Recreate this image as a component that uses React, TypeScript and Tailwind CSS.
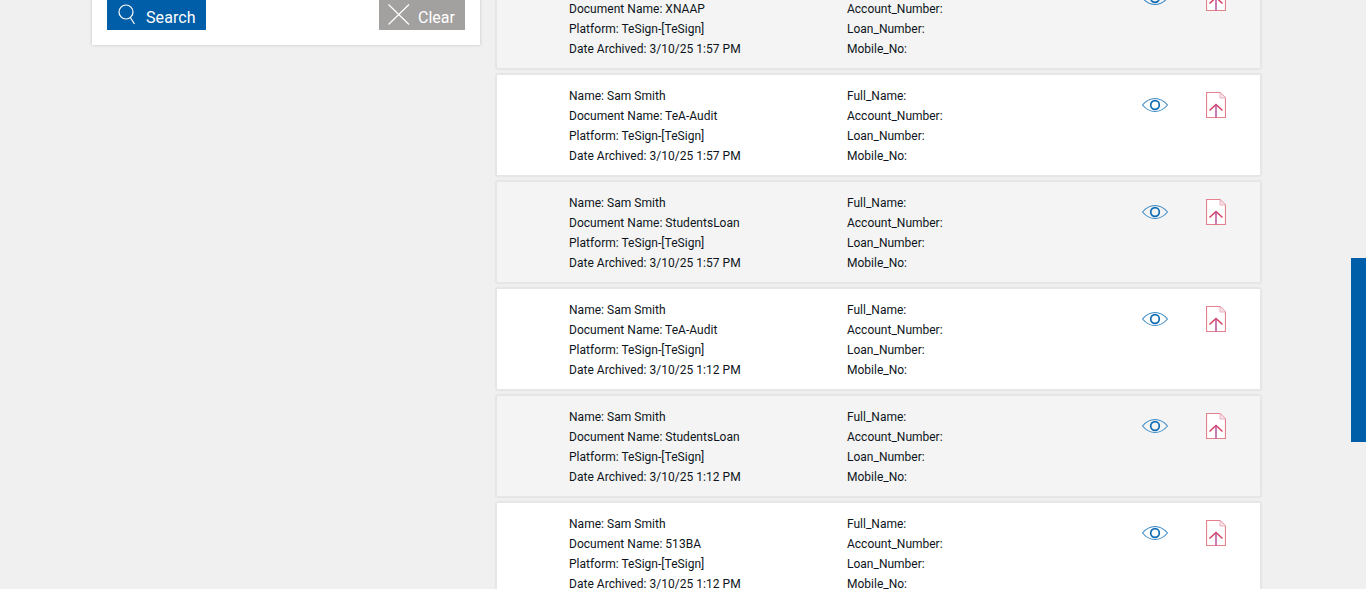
const rows = [
  { doc: "XNAAP", date: "3/10/25 1:57 PM" },
  { doc: "TeA-Audit", date: "3/10/25 1:57 PM" },
  { doc: "StudentsLoan", date: "3/10/25 1:57 PM" },
  { doc: "TeA-Audit", date: "3/10/25 1:12 PM" },
  { doc: "StudentsLoan", date: "3/10/25 1:12 PM" },
  { doc: "513BA", date: "3/10/25 1:12 PM" },
];

function EyeIcon() {
  return (
    <svg width="26" height="16" viewBox="0 0 26 16" fill="none" className="block">
      <path d="M.5 8C4.2 3.6 8.4 1.5 13 1.5S21.8 3.6 25.5 8C21.8 12.4 17.6 14.5 13 14.5S4.2 12.4.5 8Z" stroke="#3d8ac4" strokeWidth="1.1" />
      <circle cx="13" cy="8" r="4.3" stroke="#0f6cb4" strokeWidth="1.7" />
    </svg>
  );
}

function UploadDocIcon() {
  return (
    <svg width="20" height="26" viewBox="0 0 20 26" fill="none" className="block">
      <path d="M.5.5H14L19.5 6V25.5H.5Z" fill="#fff" stroke="#e5808f" strokeWidth="1.2" />
      <path d="M14 .5V6H19.5" fill="#f6e4ea" stroke="#ebb0c0" strokeWidth="1" />
      <path d="M3.5 18.5L10 12.5L16.5 18.5" stroke="#d83f5f" strokeWidth="1.5" />
      <path d="M10 12.5V25.5" stroke="#b9529a" strokeWidth="1.5" />
    </svg>
  );
}

function SearchIcon() {
  return (
    <svg width="18" height="21" viewBox="0 0 18 21" fill="none" className="block">
      <circle cx="8" cy="8" r="7" stroke="#fff" strokeWidth="1.2" />
      <path d="M12.3 13.5L16.5 20" stroke="#fff" strokeWidth="1.2" />
    </svg>
  );
}

function ClearIcon() {
  return (
    <svg width="22" height="21" viewBox="0 0 22 21" fill="none" className="block">
      <path d="M.5.5L21 20.5M21 .5L.5 20.5" stroke="#fff" strokeWidth="1.2" />
    </svg>
  );
}

function ArchiveRow({ doc, date, shaded }: { doc: string; date: string; shaded: boolean }) {
  return (
    <div className={`flex h-[102px] border border-[#e6e6e6] pl-[72px] pt-[11px] shadow-[0_0_2px_rgba(0,0,0,0.12)] ${shaded ? "bg-[#f4f4f4]" : "bg-white"}`}>
      <div className="w-[278px] text-[12px] leading-[20px] tracking-[0.03px] text-[#0d1420]">
        <div>Name: Sam Smith</div>
        <div>Document Name: {doc}</div>
        <div>Platform: TeSign-[TeSign]</div>
        <div>Date Archived: {date}</div>
      </div>
      <div className="w-[295px] text-[12px] leading-[20px] text-[#0d1420]">
        <div>Full_Name:</div>
        <div>Account_Number:</div>
        <div>Loan_Number:</div>
        <div>Mobile_No:</div>
      </div>
      <div className="pt-[11px]">
        <EyeIcon />
      </div>
      <div className="ml-[38px] pt-[6px]">
        <UploadDocIcon />
      </div>
    </div>
  );
}

export default function App() {
  return (
    <div className="relative h-[589px] overflow-hidden bg-[#f0f0f0] font-['Roboto',sans-serif]">
      <div className="flex items-start pl-[92px]">
        <aside className="-mt-[10px] flex h-[55px] w-[388px] items-start justify-between bg-white px-[15px] shadow-[0_0_3px_rgba(0,0,0,0.2)]">
          <button className="flex h-[40px] w-[99px] items-start bg-[#005ea8] pl-[11px] pt-[14px] text-[16px] leading-[22px] tracking-[0.1px] text-white">
            <SearchIcon />
            <span className="ml-[10px] mt-[3px]">Search</span>
          </button>
          <button className="flex h-[40px] w-[86px] items-start bg-[#a3a19f] pl-[9px] pt-[14px] text-[16px] leading-[22px] text-white">
            <ClearIcon />
            <span className="ml-[8px] mt-[3px]">Clear</span>
          </button>
        </aside>
        <main className="ml-[16px] -mt-[33px] flex w-[765px] flex-col gap-[5px]">
          {rows.map((row, i) => (
            <ArchiveRow key={i} doc={row.doc} date={row.date} shaded={i % 2 === 0} />
          ))}
        </main>
      </div>
      <div className="absolute right-0 top-[258px] h-[184px] w-[15px] bg-[#005ea8]" />
    </div>
  );
}
